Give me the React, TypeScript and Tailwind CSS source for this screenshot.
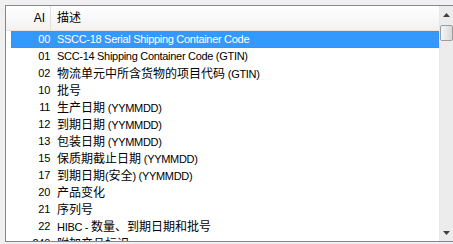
import React from 'react';

interface Row {
  ai: string;
  desc: string;
}

const rows: Row[] = [
  { ai: '00', desc: 'SSCC-18 Serial Shipping Container Code' },
  { ai: '01', desc: 'SCC-14 Shipping Container Code (GTIN)' },
  { ai: '02', desc: '物流单元中所含货物的项目代码 (GTIN)' },
  { ai: '10', desc: '批号' },
  { ai: '11', desc: '生产日期 (YYMMDD)' },
  { ai: '12', desc: '到期日期 (YYMMDD)' },
  { ai: '13', desc: '包装日期 (YYMMDD)' },
  { ai: '15', desc: '保质期截止日期 (YYMMDD)' },
  { ai: '17', desc: '到期日期(安全) (YYMMDD)' },
  { ai: '20', desc: '产品变化' },
  { ai: '21', desc: '序列号' },
  { ai: '22', desc: 'HIBC - 数量、到期日期和批号' },
  { ai: '240', desc: '附加产品标识' },
];

const font = { fontFamily: 'Tahoma, "Liberation Sans", "Noto Sans CJK SC", sans-serif' };

// CJK runs render a bit larger than the latin text, like the Windows list view
const renderText = (text: string) =>
  text.split(/([\u3000-\u9fff\uff00-\uffef]+)/).map((part, i) =>
    /[\u3000-\u9fff\uff00-\uffef]/.test(part) ? (
      <span key={i} className="text-[12px] tracking-normal">{part}</span>
    ) : (
      <span key={i}>{part}</span>
    )
  );

export default function App() {
  return (
    <div className="w-[453px] h-[244px] bg-[#f0f0f0] pt-[5px] pl-[5px] overflow-hidden" style={font}>
      <div className="flex h-[237px] border-l border-t border-b border-[#828790] bg-white">
        {/* list */}
        <div className="flex flex-col w-[433px] overflow-hidden">
          <div className="flex h-[25px] shrink-0 items-center bg-gradient-to-b from-white to-[#f2f2f2] border-b border-[#e5e5e5] text-[12px] text-black">
            <div className="w-[45px] h-full flex items-center justify-end pr-[5px] border-r border-[#e0e0e0]">AI</div>
            <div className="pl-[6px]">描述</div>
          </div>
          <div className="flex flex-col pl-[5px]">
            {rows.map((r, i) => (
              <div
                key={r.ai}
                className={
                  i === 0
                    ? 'flex h-[17px] shrink-0 items-center bg-[#3399ff] text-white text-[11px] tracking-[-0.3px] outline-1 outline-dotted outline-[#cc6a1a] -outline-offset-1'
                    : 'flex h-[17px] shrink-0 items-center text-[#000] text-[11px] tracking-[-0.3px]'
                }
              >
                <div className="w-[39px] text-right pr-[0px]">{r.ai}</div>
                <div className="pl-[7px] whitespace-nowrap">{renderText(r.desc)}</div>
              </div>
            ))}
          </div>
        </div>
        {/* scrollbar */}
        <div className="flex flex-col w-[14px] bg-[#ececec] border-l border-[#e8e8e8]">
          <div className="h-[17px] flex items-center justify-center">
            <svg width="7" height="4" viewBox="0 0 7 4"><path d="M3.5 0L7 4H0z" fill="#404040" /></svg>
          </div>
          <div className="mt-[2px] h-[16px] rounded-[2px] border border-[#9c9c9c] bg-gradient-to-r from-[#f4f4f4] via-[#e8e8e8] to-[#d8d8d8]" />
          <div className="flex-1" />
          <div className="h-[17px] flex items-center justify-center">
            <svg width="7" height="4" viewBox="0 0 7 4"><path d="M0 0H7L3.5 4z" fill="#404040" /></svg>
          </div>
        </div>
      </div>
    </div>
  );
}
